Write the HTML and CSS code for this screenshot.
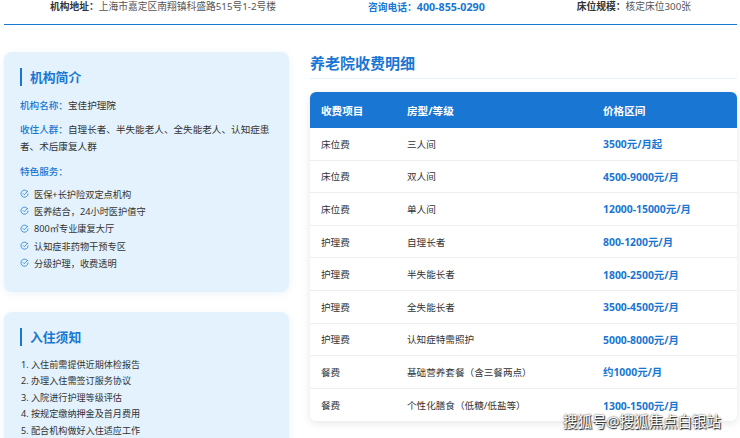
FILE: index.html
```html
<!DOCTYPE html>
<html lang="zh-CN">
<head>
  <meta charset="UTF-8">
  <meta name="viewport" content="width=device-width, initial-scale=1.0">
  <title>宝佳护理院</title>
  <link rel="stylesheet" href="styles.css">
</head>
<body>
  <div class="page">
    <div class="info-bar">
      <div class="info-item"><b>机构地址：</b>上海市嘉定区南翔镇科盛路515号1-2号楼</div>
      <div class="info-item phone"><b>咨询电话：<span>400-855-0290</span></b></div>
      <div class="info-item"><b>床位规模：</b>核定床位300张</div>
    </div>

    <div class="content">
      <div class="sidebar">
        <div class="card">
          <h3 class="card-title">机构简介</h3>
          <p class="field"><span>机构名称：</span>宝佳护理院</p>
          <p class="field"><span>收住人群：</span>自理长者、半失能老人、全失能老人、认知症患者、术后康复人群</p>
          <p class="field field-head"><span>特色服务：</span></p>
          <ul class="checks">
            <li><svg viewBox="0 0 16 16"><path d="M13.6 5.4A6.3 6.3 0 1 0 14.3 8"/><path d="M5 7.6l2.5 2.5L14 3.8"/></svg>医保+长护险双定点机构</li>
            <li><svg viewBox="0 0 16 16"><path d="M13.6 5.4A6.3 6.3 0 1 0 14.3 8"/><path d="M5 7.6l2.5 2.5L14 3.8"/></svg>医养结合，24小时医护值守</li>
            <li><svg viewBox="0 0 16 16"><path d="M13.6 5.4A6.3 6.3 0 1 0 14.3 8"/><path d="M5 7.6l2.5 2.5L14 3.8"/></svg>800㎡专业康复大厅</li>
            <li><svg viewBox="0 0 16 16"><path d="M13.6 5.4A6.3 6.3 0 1 0 14.3 8"/><path d="M5 7.6l2.5 2.5L14 3.8"/></svg>认知症非药物干预专区</li>
            <li><svg viewBox="0 0 16 16"><path d="M13.6 5.4A6.3 6.3 0 1 0 14.3 8"/><path d="M5 7.6l2.5 2.5L14 3.8"/></svg>分级护理，收费透明</li>
          </ul>
        </div>

        <div class="card">
          <h3 class="card-title">入住须知</h3>
          <ol class="notes">
            <li>入住前需提供近期体检报告</li>
            <li>办理入住需签订服务协议</li>
            <li>入院进行护理等级评估</li>
            <li>按规定缴纳押金及首月费用</li>
            <li>配合机构做好入住适应工作</li>
          </ol>
        </div>
      </div>

      <div class="main">
        <h2 class="main-title">养老院收费明细</h2>
        <table class="fees">
          <thead>
            <tr><th>收费项目</th><th>房型/等级</th><th>价格区间</th></tr>
          </thead>
          <tbody>
            <tr><td>床位费</td><td>三人间</td><td class="price">3500元/月起</td></tr>
            <tr><td>床位费</td><td>双人间</td><td class="price">4500-9000元/月</td></tr>
            <tr><td>床位费</td><td>单人间</td><td class="price">12000-15000元/月</td></tr>
            <tr><td>护理费</td><td>自理长者</td><td class="price">800-1200元/月</td></tr>
            <tr><td>护理费</td><td>半失能长者</td><td class="price">1800-2500元/月</td></tr>
            <tr><td>护理费</td><td>全失能长者</td><td class="price">3500-4500元/月</td></tr>
            <tr><td>护理费</td><td>认知症特需照护</td><td class="price">5000-8000元/月</td></tr>
            <tr><td>餐费</td><td>基础营养套餐（含三餐两点）</td><td class="price">约1000元/月</td></tr>
            <tr><td>餐费</td><td>个性化膳食（低糖/低盐等）</td><td class="price">1300-1500元/月</td></tr>
          </tbody>
        </table>
      </div>
    </div>

    <div class="watermark">搜狐号@搜狐焦点白银站</div>
  </div>
</body>
</html>
```

FILE: styles.css
```css
:root {
  --blue: #1976d2;
  --pale: #e3f2fd;
  --text: #333333;
}

html, body {
  height: 100%;
}

body {
  margin: 0;
  background: #ffffff;
  color: var(--text);
  font-family: "Noto Sans", "Noto Sans CJK SC", sans-serif;
  overflow: hidden;
}

.page {
  position: relative;
  height: 438px;
  padding: 0 3px 0 4px;
  overflow: hidden;
}

.info-bar {
  display: flex;
  justify-content: space-around;
  height: 24px;
  border-bottom: 1px solid var(--blue);
  font-size: 9.75px;
  line-height: 14px;
  color: #555555;
}

.info-item b {
  color: var(--text);
  font-weight: 700;
}

.phone b {
  color: var(--blue);
}

.phone span {
  font-size: 10.7px;
}

.content {
  display: grid;
  grid-template-columns: 285px 427px;
  column-gap: 21px;
  padding-top: 27px;
}

.sidebar {
  display: flex;
  flex-direction: column;
  gap: 20px;
}

.card {
  background: var(--pale);
  border-radius: 8px;
  padding: 16px;
  box-shadow: 0 2px 8px rgba(25, 118, 210, 0.08);
}

.card:first-child {
  height: 240px;
  box-sizing: border-box;
}

.card-title {
  margin: 0 0 11px;
  padding-left: 8px;
  border-left: 2px solid var(--blue);
  color: var(--blue);
  font-size: 12.8px;
  line-height: 18px;
  font-weight: 700;
}

.field {
  margin: 0 0 7px;
  font-size: 9.6px;
  line-height: 17px;
}

.field span {
  color: var(--blue);
  font-weight: 500;
}

.field-head {
  margin-top: 8px;
  margin-bottom: 5px;
}

.checks {
  list-style: none;
  margin: 0;
  padding: 0;
  font-size: 9.2px;
}

.checks li {
  display: flex;
  align-items: center;
  height: 17.3px;
}

.checks svg {
  width: 9px;
  height: 9px;
  margin-right: 5px;
  fill: none;
  stroke: var(--blue);
  stroke-width: 1.3;
}

.notes {
  margin: 0;
  padding: 0 0 0 11px;
  font-size: 9.1px;
  line-height: 16.4px;
}

.main-title {
  margin: 0 0 13px;
  padding-bottom: 4px;
  border-bottom: 1px solid var(--pale);
  color: var(--blue);
  font-size: 15px;
  line-height: 22px;
  font-weight: 700;
}

.fees {
  width: 427px;
  table-layout: fixed;
  border-collapse: separate;
  border-spacing: 0;
  border-radius: 6px;
  overflow: hidden;
  font-size: 9.6px;
  box-shadow: 0 2px 8px rgba(0, 0, 0, 0.1);
}

.fees th, .fees td {
  box-sizing: border-box;
  padding: 0 11px;
}

.fees th:nth-child(1) { width: 86px; }
.fees th:nth-child(2) { width: 196px; }

.fees th {
  height: 36px;
  background: var(--blue);
  color: #ffffff;
  font-size: 10.6px;
  font-weight: 700;
  text-align: left;
}

.fees td {
  height: 32.6px;
  border-bottom: 1px solid #eeeeee;
}

.fees tr:last-child td {
  border-bottom: 0;
}

.fees .price {
  color: var(--blue);
  font-size: 10.4px;
  font-weight: 700;
}

.watermark {
  position: absolute;
  left: 563px;
  top: 411px;
  color: #ffffff;
  font-size: 14.5px;
  line-height: 20px;
  text-shadow: 0 0 2px #222222, 1px 1px 1px #222222;
}
```
